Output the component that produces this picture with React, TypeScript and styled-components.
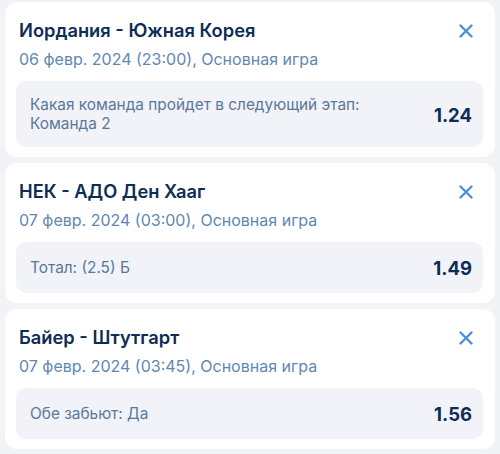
import styled, { createGlobalStyle } from 'styled-components';

const GlobalStyle = createGlobalStyle`
  html, body {
    margin: 0;
    padding: 0;
    background: #f1f3f7;
  }
  body {
    font-family: Inter, "Noto Sans", sans-serif;
    -webkit-font-smoothing: antialiased;
  }
`;

const List = styled.div`
  display: flex;
  flex-direction: column;
  gap: 6px;
  padding: 2px 5px;
`;

const Card = styled.div`
  background: #ffffff;
  border-radius: 12px;
  padding: 17px 12px 10px 11px;
`;

const Head = styled.div`
  display: flex;
  align-items: flex-start;
  justify-content: space-between;
  padding-left: 3px;
`;

const Title = styled.div`
  font-size: 18.3px;
  font-weight: 600;
  color: #0e2d55;
  line-height: 22px;
`;

const Close = styled.button`
  border: 0;
  background: none;
  padding: 0;
  margin: 5px 10px 0 0;
  width: 14px;
  height: 14px;
  display: flex;
  cursor: pointer;
`;

const Meta = styled.div`
  font-size: 16px;
  color: #5f87b2;
  line-height: 20px;
  margin-top: 8px;
  padding-left: 3px;
`;

const Bet = styled.div`
  margin-top: 12px;
  background: #f1f3f8;
  border-radius: 10px;
  display: flex;
  align-items: center;
  justify-content: space-between;
  padding: 15px 11px 14px 14px;
  gap: 14px;
`;

const Market = styled.div`
  font-size: 15.4px;
  line-height: 18.5px;
  color: #5a7898;
`;

const Odds = styled.div`
  font-size: 18.5px;
  font-weight: 700;
  color: #0e2d55;
  flex-shrink: 0;
`;

const CloseIcon = () => (
  <svg width="14" height="14" viewBox="0 0 14 14">
    <path
      d="M1.5 1.5 L12.5 12.5 M12.5 1.5 L1.5 12.5"
      stroke="#4a8fd8"
      strokeWidth="2.4"
      strokeLinecap="round"
    />
  </svg>
);

const bets = [
  {
    title: 'Иордания - Южная Корея',
    date: '06 февр. 2024 (23:00), Основная игра',
    market: 'Какая команда пройдет в следующий этап: Команда 2',
    odds: '1.24',
  },
  {
    title: 'НЕК - АДО Ден Хааг',
    date: '07 февр. 2024 (03:00), Основная игра',
    market: 'Тотал: (2.5) Б',
    odds: '1.49',
  },
  {
    title: 'Байер - Штутгарт',
    date: '07 февр. 2024 (03:45), Основная игра',
    market: 'Обе забьют: Да',
    odds: '1.56',
  },
];

const App = () => (
  <>
    <GlobalStyle />
    <List>
      {bets.map(b => (
        <Card key={b.title}>
          <Head>
            <Title>{b.title}</Title>
            <Close aria-label="Удалить">
              <CloseIcon />
            </Close>
          </Head>
          <Meta>{b.date}</Meta>
          <Bet>
            <Market>{b.market}</Market>
            <Odds>{b.odds}</Odds>
          </Bet>
        </Card>
      ))}
    </List>
  </>
);

export default App;
